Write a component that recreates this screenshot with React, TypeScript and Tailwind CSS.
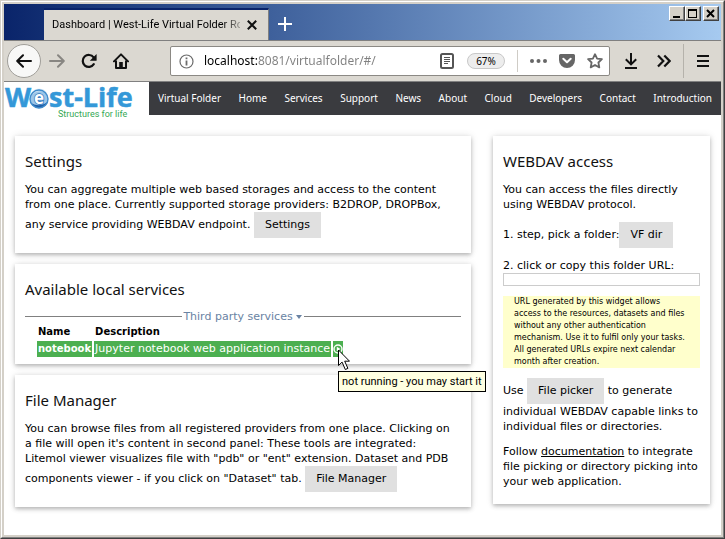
import type { ReactNode } from "react";

const navItems = [
  "Virtual Folder",
  "Home",
  "Services",
  "Support",
  "News",
  "About",
  "Cloud",
  "Developers",
  "Contact",
  "Introduction",
];

function WindowButton({ label, children }: { label: string; children: ReactNode }) {
  return (
    <button
      type="button"
      aria-label={label}
      className="flex h-[15px] w-4 items-center justify-center border border-t-white border-l-white border-r-[#404040] border-b-[#404040] bg-[#d4d0c8] shadow-[inset_-1px_-1px_0_#808080]"
    >
      {children}
    </button>
  );
}

function TitleBar() {
  return (
    <div className="flex h-[37px] items-start border-b border-[#808080] bg-linear-to-r from-[#0a246a] to-[#a6caf0]">
      <div className="ml-10 mt-1 flex h-8 w-[225px] items-center border-t-2 border-r border-t-[#0a246a] border-r-[#808080] bg-[#dbd8d1] pr-2 pl-2">
        <span className="min-w-0 flex-1 overflow-hidden whitespace-nowrap font-['Roboto',sans-serif] text-[11px] leading-4 text-black [mask-image:linear-gradient(to_right,black_170px,transparent_196px)]">
          Dashboard | West-Life Virtual Folder Ro
        </span>
        <button type="button" aria-label="Close tab" className="ml-1 flex h-4 w-4 items-center justify-center">
          <svg width="10" height="10" viewBox="0 0 10 10" fill="none" stroke="#111" strokeWidth="2">
            <path d="M.8.8l8.4 8.4M9.2.8L.8 9.2" />
          </svg>
        </button>
      </div>
      <button type="button" aria-label="New tab" className="mt-[13px] ml-[9px]">
        <svg width="14" height="14" viewBox="0 0 14 14" stroke="#fff" strokeWidth="2">
          <path d="M7 0v14M0 7h14" />
        </svg>
      </button>
      <div className="mt-[2px] mr-[2px] ml-auto flex">
        <WindowButton label="Minimize">
          <svg width="12" height="10" viewBox="0 0 12 10">
            <path d="M2 7h7v2H2z" />
          </svg>
        </WindowButton>
        <WindowButton label="Maximize">
          <svg width="12" height="10" viewBox="0 0 12 10" shapeRendering="crispEdges">
            <path fillRule="evenodd" d="M1 0h9v9H1zM2 2v6h7V2z" />
          </svg>
        </WindowButton>
        <span className="w-[2px]" />
        <WindowButton label="Close">
          <svg width="12" height="10" viewBox="0 0 12 10" stroke="#000" strokeWidth="2">
            <path d="M2 1l7 7M9 1L2 8" />
          </svg>
        </WindowButton>
      </div>
    </div>
  );
}

function Toolbar() {
  return (
    <div className="flex h-[41px] items-center border-b border-[#808080] bg-[#dbd8d1]">
      <button
        type="button"
        aria-label="Back"
        className="ml-[3px] flex h-[34px] w-[34px] items-center justify-center rounded-full border border-[#a09e99] bg-[#f8f8f7]"
      >
        <svg width="16" height="14" viewBox="0 0 16 14" fill="none" stroke="#111" strokeWidth="2" strokeLinecap="round" strokeLinejoin="round">
          <path d="M15 7H1.5M7 1.2L1.2 7 7 12.8" />
        </svg>
      </button>
      <button type="button" aria-label="Forward" className="ml-2">
        <svg width="16" height="14" viewBox="0 0 16 14" fill="none" stroke="#888682" strokeWidth="2" strokeLinecap="round" strokeLinejoin="round">
          <path d="M1 7h13.5M9 1.2L14.8 7 9 12.8" />
        </svg>
      </button>
      <button type="button" aria-label="Reload" className="ml-4">
        <svg width="16" height="16" viewBox="0 0 16 16">
          <path fill="none" stroke="#111" strokeWidth="2.2" strokeLinecap="round" d="M12.8 11.2A6 6 0 1 1 12.6 4.4" />
          <path fill="#111" d="M15.6 1v6.2a.6.6 0 0 1-.6.6H8.8z" />
        </svg>
      </button>
      <button type="button" aria-label="Home" className="ml-4">
        <svg width="16" height="16" viewBox="0 0 16 16">
          <path fill="none" stroke="#111" strokeWidth="2" strokeLinecap="round" strokeLinejoin="round" d="M1 8.4L8 1.4l7 7" />
          <path fill="none" stroke="#111" strokeWidth="2" strokeLinejoin="round" d="M3 7.6V15h10V7.6" />
          <path fill="#111" d="M6.2 9h3.6v6H6.2z" />
        </svg>
      </button>

      <div className="ml-[41px] flex h-[30px] min-w-0 flex-1 items-center rounded-[2px] border border-[#8b8984] bg-white">
        <svg className="ml-2 shrink-0" width="15" height="15" viewBox="0 0 15 15">
          <circle cx="7.5" cy="7.5" r="6.5" fill="none" stroke="#6b6b6b" strokeWidth="1.2" />
          <path fill="#6b6b6b" d="M6.6 3.4h1.8v1.8H6.6zM6.6 6.4h1.8v5H6.6z" />
        </svg>
        <input
          aria-label="Address"
          defaultValue="localhost:8081/virtualfolder/#/"
          className="ml-[10px] min-w-0 flex-1 bg-linear-to-r from-black from-[53px] to-[#808080] to-[53px] bg-clip-text font-['Noto_Sans',sans-serif] text-[12px] leading-5 text-transparent outline-none"
        />
        <svg className="shrink-0" width="14" height="16" viewBox="0 0 14 16" fill="none" stroke="#555">
          <rect x="1" y="1" width="12" height="14" rx="1.5" strokeWidth="2" />
          <path d="M4 4.5h6M4 6.5h6M4 8.5h6M4 10.5h4" />
        </svg>
        <button
          type="button"
          className="ml-[13px] h-4 w-[38px] shrink-0 rounded-full border border-[#c8c8c8] bg-[#ededed] font-['Noto_Sans',sans-serif] text-[10px] leading-[14px] text-black"
        >
          67%
        </button>
        <span className="ml-3 h-[22px] w-px shrink-0 bg-[#cfccc6]" />
        <button type="button" aria-label="Page actions" className="ml-3 shrink-0">
          <svg width="17" height="4" viewBox="0 0 17 4" fill="#666">
            <circle cx="2" cy="2" r="2" />
            <circle cx="8.5" cy="2" r="2" />
            <circle cx="15" cy="2" r="2" />
          </svg>
        </button>
        <button type="button" aria-label="Save to Pocket" className="ml-3 shrink-0">
          <svg width="16" height="14" viewBox="0 0 16 14">
            <path fill="#666" d="M1.5 0h13A1.5 1.5 0 0 1 16 1.5V6a8 8 0 0 1-16 0V1.5A1.5 1.5 0 0 1 1.5 0z" />
            <path fill="none" stroke="#fff" strokeWidth="2" strokeLinecap="round" strokeLinejoin="round" d="M4.3 4.8L8 8.3l3.7-3.5" />
          </svg>
        </button>
        <button type="button" aria-label="Bookmark" className="mr-[6px] ml-3 shrink-0">
          <svg width="16" height="16" viewBox="0 0 16 16" fill="none" stroke="#666" strokeWidth="1.8" strokeLinejoin="round">
            <path d="M8 1.2l2.1 4.4 4.8.6-3.5 3.3.9 4.9L8 12l-4.3 2.4.9-4.9L1.1 6.2l4.8-.6z" />
          </svg>
        </button>
      </div>

      <button type="button" aria-label="Downloads" className="ml-[15px]">
        <svg width="12" height="16" viewBox="0 0 12 16" fill="none" stroke="#111" strokeWidth="2">
          <path d="M6 0v11M.8 6.2L6 11.4l5.2-5.2M0 15h12" />
        </svg>
      </button>
      <button type="button" aria-label="More tools" className="ml-5">
        <svg width="14" height="14" viewBox="0 0 14 14" fill="none" stroke="#111" strokeWidth="2.2">
          <path d="M1 1.5L6.3 7 1 12.5M7.3 1.5L12.6 7l-5.3 5.5" />
        </svg>
      </button>
      <span className="ml-3 h-[34px] w-px bg-[#b5b2ab]" />
      <button type="button" aria-label="Open menu" className="mr-3 ml-[13px]">
        <svg width="12" height="12" viewBox="0 0 12 12" stroke="#111" strokeWidth="2">
          <path d="M0 1h12M0 6h12M0 11h12" />
        </svg>
      </button>
    </div>
  );
}

function Logo() {
  return (
    <svg className="h-10 w-[145px] shrink-0 overflow-visible" viewBox="0 0 145 40" role="img" aria-label="West-Life, Structures for life">
      <g fill="#3498d8" stroke="#3498d8" strokeWidth="0.5" fontFamily="'Open Sans', sans-serif" fontWeight="700" fontSize="27">
        <text x="1" y="25">W</text>
        <text x="45" y="25">st-Life</text>
      </g>
      <circle cx="35" cy="17" r="9" fill="#9cc6e8" />
      <path d="M27 21a9.2 9.2 0 0 0 17-2c-3 4-10 6-17 2z" fill="#1f5fa8" />
      <path d="M26.5 14a9 9 0 0 1 16.500-3c-5-3-12-2-16.500 3z" fill="#d3e6f5" />
      <circle cx="35" cy="17" r="9" fill="none" stroke="#3f8bcb" strokeWidth="1.4" />
      <text x="30" y="22" fill="#fff" stroke="#2f78bd" strokeWidth="1.4" paintOrder="stroke" fontFamily="'Open Sans', sans-serif" fontWeight="700" fontSize="17">
        e
      </text>
      <text x="54" y="35" fill="#35a853" fontFamily="Roboto, sans-serif" fontSize="9">
        Structures for life
      </text>
    </svg>
  );
}

function Card({ title, compact = false, children }: { title: string; compact?: boolean; children: ReactNode }) {
  return (
    <section
      className={`bg-white px-[10px] pt-[13px] shadow-[0_2px_4px_rgba(0,0,0,0.25),0_0_8px_rgba(0,0,0,0.1)] ${
        compact ? "pb-[6px]" : "pb-[15px]"
      }`}
    >
      <h2 className="mb-[9px] font-['Noto_Sans',sans-serif] text-[15px] leading-6 text-[#111]">{title}</h2>
      {children}
    </section>
  );
}

function GrayButton({ children }: { children: ReactNode }) {
  return (
    <button type="button" className="inline-block bg-[#e0e0e0] px-[11px] leading-[26px] text-black">
      {children}
    </button>
  );
}

function ServicesTable() {
  return (
    <table className="ml-[10px] border-separate border-spacing-x-[2px] border-spacing-y-px leading-4">
      <thead>
        <tr className="text-left text-[10px]">
          <th className="px-px">Name</th>
          <th className="px-px">Description</th>
          <td />
        </tr>
      </thead>
      <tbody>
        <tr className="text-white">
          <th className="bg-[#4caf50] px-px text-left text-[10px]">notebook</th>
          <td className="bg-[#4caf50] px-px whitespace-nowrap">Jupyter notebook web application instance</td>
          <td className="relative bg-[#4caf50]">
            <button type="button" aria-label="Start service" className="block">
              <svg width="10" height="10" viewBox="0 0 10 10">
                <circle cx="5" cy="5" r="4" fill="none" stroke="#fff" strokeWidth="1.4" />
                <path d="M3.8 2.8L7.4 5 3.8 7.2z" fill="#fff" />
              </svg>
            </button>
            <svg className="absolute top-2 left-[5px] z-20" width="12" height="22" viewBox="0 0 12 22">
              <path d="M.5 1v15.5l3.6-3.4 3.2 7.4 2.6-1.1-3.2-7.2h4.8z" fill="#fff" stroke="#000" />
            </svg>
            <span
              role="tooltip"
              className="absolute top-[30px] left-[5px] z-10 border border-black bg-[#ffffe1] px-[3px] font-['Roboto',sans-serif] text-[11px] leading-[19px] whitespace-nowrap text-black"
            >
              not running - you may start it
            </span>
          </td>
        </tr>
      </tbody>
    </table>
  );
}

export default function App() {
  return (
    <div className="flex min-h-screen flex-col border border-t-[#d4d0c8] border-l-[#d4d0c8] border-r-[#404040] border-b-[#404040] bg-white font-['DejaVu_Sans',sans-serif] text-[11px] leading-[15px] text-black">
      <div className="flex flex-1 flex-col border border-t-white border-l-white border-r-[#808080] border-b-[#808080]">
        <div className="flex flex-1 flex-col border-2 border-[#d4d0c8]">
          <TitleBar />
          <Toolbar />

          <header className="flex items-start">
            <Logo />
            <nav className="flex h-[33px] flex-1 items-center justify-between bg-[#3a3b3f] px-[9px] font-['Noto_Sans',sans-serif] text-[10px] text-white">
              {navItems.map((item) => (
                <a key={item} href="#" className="whitespace-nowrap">
                  {item}
                </a>
              ))}
            </nav>
          </header>

          <main className="grid grid-cols-[2fr_1fr] items-start pt-[14px] pb-7">
            <div className="flex flex-col gap-[11px] px-[11px]">
              <Card title="Settings">
                <p>
                  You can aggregate multiple web based storages and access to the content from one place. Currently
                  supported storage providers: B2DROP, DROPBox, any service providing WEBDAV endpoint.{" "}
                  <GrayButton>Settings</GrayButton>
                </p>
              </Card>

              <Card title="Available local services" compact>
                <button type="button" className="flex w-full items-center leading-[13px] text-[#6a83a3]">
                  <span className="h-px flex-1 bg-[#808080]" />
                  <span className="px-px">Third party services</span>
                  <svg className="mx-[2px]" width="6" height="4" viewBox="0 0 6 4" fill="#6a83a3">
                    <path d="M0 0h6L3 4z" />
                  </svg>
                  <span className="h-px flex-1 bg-[#808080]" />
                </button>
                <ServicesTable />
              </Card>

              <Card title="File Manager">
                <p className="pr-1">
                  You can browse files from all registered providers from one place. Clicking on a file will open it's
                  content in second panel: These tools are integrated: Litemol viewer visualizes file with "pdb" or
                  "ent" extension. Dataset and PDB components viewer - if you click on "Dataset" tab.{" "}
                  <GrayButton>File Manager</GrayButton>
                </p>
              </Card>
            </div>

            <div className="px-[11px]">
              <Card title="WEBDAV access">
                <div className="flex flex-col gap-[10px]">
                  <p>You can access the files directly using WEBDAV protocol.</p>
                  <p>
                    1. step, pick a folder:
                    <GrayButton>VF dir</GrayButton>
                  </p>
                  <div>
                    <label htmlFor="folder-url" className="block">
                      2. click or copy this folder URL:
                    </label>
                    <input id="folder-url" readOnly className="block h-[13px] w-full border border-[#ccc] bg-white" />
                  </div>
                  <p className="bg-[#ffffcc] px-[11px] text-[8px] leading-3">
                    URL generated by this widget allows access to the resources, datasets and files without any other
                    authentication mechanism. Use it to fulfil only your tasks. All generated URLs expire next calendar
                    month after creation.
                  </p>
                  <p>
                    Use <GrayButton>File picker</GrayButton> to generate individual WEBDAV capable links to individual
                    files or directories.
                  </p>
                  <p>
                    Follow{" "}
                    <a href="#" className="underline">
                      documentation
                    </a>{" "}
                    to integrate file picking or directory picking into your web application.
                  </p>
                </div>
              </Card>
            </div>
          </main>
        </div>
      </div>
    </div>
  );
}
